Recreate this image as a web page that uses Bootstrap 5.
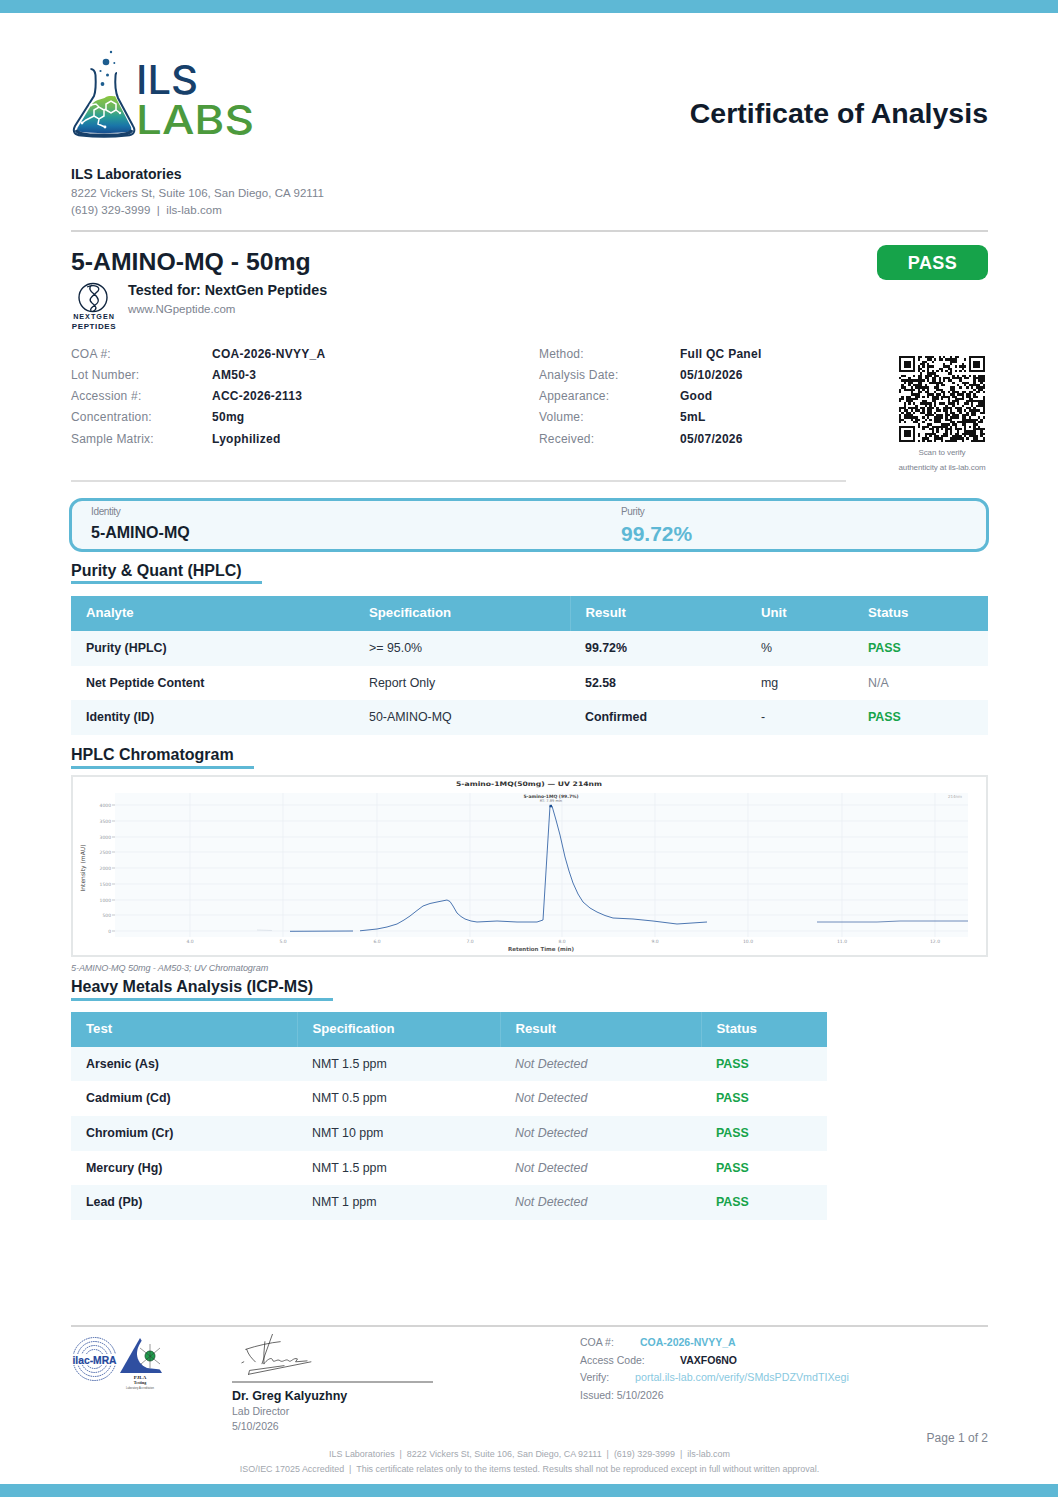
<!DOCTYPE html>
<html lang="en">
<head>
<meta charset="utf-8">
<title>Certificate of Analysis</title>
<link href="https://cdn.jsdelivr.net/npm/bootstrap@5.3.0/dist/css/bootstrap.min.css" rel="stylesheet">
<style>
:root{--cy:#5eb8d5;--ink:#151f2e;--grey:#7d8490;--pale:#f2f9fc;--ok:#16a34a}
html,body{margin:0;background:#fff}
body{font-family:"Liberation Sans",Arial,sans-serif;color:var(--ink);width:1058px;height:1497px;overflow:hidden;position:relative}
.bar{height:13px;background:var(--cy)}
.page{padding:0 70px 7px 71px;height:1471px;display:flex;flex-direction:column}
.hdr{height:87px;margin-top:37px}
.hdr svg{overflow:visible}
.doc-title{font-size:28.5px;font-weight:700;line-height:1;margin:0 0 10px;color:#101b2b}
.lab{margin-top:28px;height:65px}
.lab b{font-size:14px;display:block;line-height:19.5px}
.lab span{font-size:11.5px;color:var(--grey);display:block;letter-spacing:.05px;line-height:17.25px}
.rule{height:2px;background:#d4d4d4;margin:0}
.prod{height:44px;margin-top:13px}
.prod h1{font-size:24.8px;font-weight:700;line-height:34px;margin:0}
.pass-badge{width:111px;height:35px;border-radius:9px;background:var(--ok);color:#fff;font-size:18px;font-weight:700;letter-spacing:.4px;padding-top:2px}
.tested{height:49px;margin-top:-8px}
.tested svg{width:46px;height:49px;flex:none}
.tested .t{margin-left:11px}
.tested b{display:block;font-size:14.3px;line-height:18px}
.tested span{display:block;font-size:11.5px;color:var(--grey);line-height:20px}
.meta{margin-top:13px;height:139px}
.meta-left{width:775px;border-bottom:2px solid #dedede;height:139px}
.meta-grid{display:grid;grid-template-columns:141px 327px 141px 1fr;grid-auto-rows:21.25px;align-items:center;font-size:12px}
.meta-grid .k{color:var(--grey);letter-spacing:.2px}
.meta-grid .v{font-weight:700;color:#1a2433;letter-spacing:.27px}
.qr-col{width:92px;margin-left:auto;text-align:center;font-size:8px;color:var(--grey);letter-spacing:-.1px}
.qr-col svg{display:block;width:86px;height:86px;margin:13px auto 2.500px}
.qr-col div{line-height:15px;white-space:nowrap}
.summary{margin:16px -1px 0 -2px;height:54px;border:3px solid var(--cy);border-radius:13px;background:var(--pale);padding:5px 0 0 19px;display:flex}
.summary .a{width:530px}
.summary small{display:block;font-size:10px;line-height:12px;color:var(--grey);letter-spacing:-.35px}
.summary b{display:block;font-size:16px;line-height:26px;margin-top:2px}
.summary .pur{color:var(--cy);font-size:21px;margin-top:3px}
.sec{display:inline-block;align-self:flex-start;font-size:16px;font-weight:700;line-height:19px;margin:0;padding:0 20px 2px 0;border-bottom:3px solid var(--cy)}
.s1{margin-top:9px;padding-bottom:1px}.s2{margin-top:10px}.s3{margin-top:3px}
.coa{table-layout:fixed;margin:0;--bs-table-bg:transparent;--bs-table-striped-bg:transparent;border-collapse:collapse;font-size:12.4px}
.coa th{background:var(--cy);color:#fff;font-size:13.2px;font-weight:700;height:35px;border:0;padding:0 15px 1px;vertical-align:middle}
.t1 th:nth-child(2),.t2 th:not(:last-child){border-right:1px solid #72c1da}
.coa td{height:34.6px;padding:0 15px;border:0;vertical-align:middle;color:#2a3442}
.coa tbody tr:nth-child(odd) td{background:var(--pale)}
.coa td.n{font-weight:700;color:#1a2433}
.coa td.g{font-weight:700;color:var(--ok)}
.coa td.na{color:var(--grey)}
.coa td.nd{font-style:italic;color:var(--grey)}
.t1{width:917px;margin-top:12px}
.t2{width:756px;margin-top:11px}
.c283{width:283px}.c216{width:216px}.c176{width:176px}.c107{width:107px}.c135{width:135px}
.c226{width:226px}.c203{width:203px}.c201{width:201px}.c126{width:126px}
.chart{margin-top:6px;height:182px;border:2px solid #e4e7e8}
.chart svg{display:block;width:913px;height:178px}
.cap{font-size:9.1px;font-style:italic;color:var(--grey);line-height:11px;margin-top:6px;letter-spacing:-.1px}
.foot{margin-top:auto}
.foot-top{height:113px;padding-top:7px;display:flex}
.acc{width:161px}
.acc svg{display:block;width:100px;height:62px}
.sig{width:201px}
.sig svg{display:block;width:201px;height:49px;border-bottom:2px solid #aaa}
.sig b{display:block;font-size:12.5px;line-height:16px;margin-top:5px}
.sig span{display:block;font-size:10.5px;line-height:15px;color:var(--grey)}
.ver{margin-left:147px;font-size:10.5px;color:var(--grey);line-height:17.6px}
.ver .x{display:flex}
.ver .l1{width:60px}.ver .l2{width:100px}.ver .l3{width:55px}
.ver b.c{color:var(--cy)}.ver b.d{color:#1a2433}.ver .u{color:#89c9df;font-size:10.7px}
.pg{font-size:12px;color:var(--grey);text-align:right;line-height:14px;margin-top:-9px}
.fine{font-size:8.95px;line-height:15px;color:#a3a8af;text-align:center;margin-top:2px;height:30px}
.bar-b{position:absolute;left:0;right:0;bottom:0}
</style>
</head>
<body>
<div class="bar"></div>
<div class="page">
  <div class="hdr d-flex justify-content-between align-items-end">
    <svg width="183" height="87" viewBox="71 50 183 87" role="img" aria-label="ILS Labs">
      <defs>
        <linearGradient id="liq" x1="0" y1="0" x2="0" y2="1"><stop offset="0" stop-color="#8cc63f"/><stop offset=".3" stop-color="#68b560"/><stop offset=".55" stop-color="#2a9d96"/><stop offset=".8" stop-color="#1a75a8"/><stop offset="1" stop-color="#174f8f"/></linearGradient>
      </defs>
      <path d="M92 104C98 98 102 100 106 97C110 95 113 97 115 96L131 127C132 130 130 131.500 127 132C113 133.500 95 133.500 82 132C78 131.500 76 130 78 127Z" fill="url(#liq)"/>
      <path d="M90.500 69C94 69 95 71 95.500 75C96 84 95.500 92 94 96L75 126C72 132 75 135 81 135.500C95 137 113 137 127 135.500C134 135 136 131 133 126L118 98C115.500 92 115 82 115.500 76C115.500 73.500 116 73 117 73" fill="none" stroke="#17406a" stroke-width="2"/>
      <path d="M76 130C78 134 84 134.500 90 135H118C124 134.500 130 134 132 130" fill="none" stroke="#17406a" stroke-width="3"/>
      <g fill="#1d5d8f">
        <circle cx="106" cy="62" r="3.300"/><circle cx="111" cy="52" r="1.200"/><circle cx="114.300" cy="63" r="1"/><circle cx="100.500" cy="71" r="1.100"/><circle cx="107.500" cy="75" r="1.500"/><circle cx="102.500" cy="84" r="1.900"/>
      </g>
      <g fill="none" stroke="#fff" stroke-width="1.500">
        <path d="M106 104l5 -3l5 3v6l-5 3l-5 -3zM94 110l5 -3l5 3v6l-5 3l-5 -3zM104 110l2 -1M99 119l-1 5l7 3M94 116l-8 4l-4 3M116 110l4 3M99 107l-3 -3l-5 1"/>
      </g>
      <g fill="#fff"><circle cx="105" cy="127" r="1.400"/><circle cx="82" cy="123" r="1.400"/><circle cx="91" cy="105" r="1.400"/><circle cx="120" cy="113" r="1.200"/></g>
      <text x="136" y="94" font-family="Inter,'Open Sans',sans-serif" font-weight="500" font-size="39" fill="#17406a" textLength="62" lengthAdjust="spacingAndGlyphs">ILS</text>
      <text x="136" y="134" font-family="Inter,'Open Sans',sans-serif" font-weight="500" font-size="40" fill="#4c9a3d" textLength="118" lengthAdjust="spacingAndGlyphs">LABS</text>
    </svg>
    <h2 class="doc-title">Certificate of Analysis</h2>
  </div>

  <div class="lab">
    <b>ILS Laboratories</b>
    <span>8222 Vickers St, Suite 106, San Diego, CA 92111</span>
    <span>(619) 329-3999 &nbsp;|&nbsp; ils-lab.com</span>
  </div>
  <div class="rule"></div>

  <div class="prod d-flex justify-content-between align-items-start">
    <h1>5-AMINO-MQ - 50mg</h1>
    <div class="pass-badge d-flex align-items-center justify-content-center">PASS</div>
  </div>

  <div class="tested d-flex">
    <svg viewBox="71 281 46 49" role="img" aria-label="NextGen Peptides">
      <circle cx="93" cy="297.500" r="14" fill="none" stroke="#10253f" stroke-width="1.400"/>
      <path d="M87 287C95 284 101 287 98 291C93 296 87 299 92 303C96 306 98 309 93 311.500M92 285C88 288 90 291 94 294C99 298 100 302 95 305C91 308 90 309 91 311" fill="none" stroke="#10253f" stroke-width="1.300"/>
      <text x="94" y="319" text-anchor="middle" font-size="7.200" font-weight="700" letter-spacing="1" fill="#10253f" font-family="'Liberation Sans',sans-serif">NEXTGEN</text>
      <text x="94" y="329" text-anchor="middle" font-size="8" font-weight="700" letter-spacing=".6" fill="#10253f" font-family="'Liberation Sans',sans-serif">PEPTIDES</text>
    </svg>
    <div class="t"><b>Tested for: NextGen Peptides</b><span>www.NGpeptide.com</span></div>
  </div>

  <div class="meta d-flex">
    <div class="meta-left">
      <div class="meta-grid">
        <div class="k">COA #:</div><div class="v">COA-2026-NVYY_A</div><div class="k">Method:</div><div class="v">Full QC Panel</div>
        <div class="k">Lot Number:</div><div class="v">AM50-3</div><div class="k">Analysis Date:</div><div class="v">05/10/2026</div>
        <div class="k">Accession #:</div><div class="v">ACC-2026-2113</div><div class="k">Appearance:</div><div class="v">Good</div>
        <div class="k">Concentration:</div><div class="v">50mg</div><div class="k">Volume:</div><div class="v">5mL</div>
        <div class="k">Sample Matrix:</div><div class="v">Lyophilized</div><div class="k">Received:</div><div class="v">05/07/2026</div>
      </div>
    </div>
    <div class="qr-col">
      <svg id="qr" viewBox="0 0 37 37" shape-rendering="crispEdges" role="img" aria-label="QR code"></svg>
      <div>Scan to verify</div>
      <div>authenticity at ils-lab.com</div>
    </div>
  </div>

  <div class="summary">
    <div class="a"><small>Identity</small><b>5-AMINO-MQ</b></div>
    <div><small>Purity</small><b class="pur">99.72%</b></div>
  </div>

  <h3 class="sec s1">Purity &amp; Quant (HPLC)</h3>
  <table class="table coa t1">
    <colgroup><col class="c283"><col class="c216"><col class="c176"><col class="c107"><col class="c135"></colgroup>
    <thead><tr><th>Analyte</th><th>Specification</th><th>Result</th><th>Unit</th><th>Status</th></tr></thead>
    <tbody>
      <tr><td class="n">Purity (HPLC)</td><td>&gt;= 95.0%</td><td class="n">99.72%</td><td>%</td><td class="g">PASS</td></tr>
      <tr><td class="n">Net Peptide Content</td><td>Report Only</td><td class="n">52.58</td><td>mg</td><td class="na">N/A</td></tr>
      <tr><td class="n">Identity (ID)</td><td>50-AMINO-MQ</td><td class="n">Confirmed</td><td>-</td><td class="g">PASS</td></tr>
    </tbody>
  </table>

  <h3 class="sec s2">HPLC Chromatogram</h3>
  <div class="chart">
    <svg viewBox="73 777 913 178" role="img" aria-label="HPLC chromatogram" font-family="'DejaVu Sans',sans-serif">
      <rect x="115" y="793" width="853" height="144" fill="#f8fbfd"/>
      <g stroke="#e9eef2" stroke-width=".7">
        <path d="M190 793V937M283 793V937M377 793V937M470 793V937M562 793V937M655 793V937M748 793V937M842 793V937M935 793V937"/>
        <path d="M115 805H968M115 821H968M115 837H968M115 852H968M115 868H968M115 884H968M115 900H968M115 915H968M115 931H968"/>
      </g>
      <g stroke="#9aa3ab" stroke-width=".6"><path d="M112 805h3M112 821h3M112 837h3M112 852h3M112 868h3M112 884h3M112 900h3M112 915h3M112 931h3"/></g>
      <g font-size="4.500" fill="#9097a0" text-anchor="end">
        <text x="111" y="807">4000</text><text x="111" y="823">3500</text><text x="111" y="839">3000</text><text x="111" y="854">2500</text><text x="111" y="870">2000</text><text x="111" y="886">1500</text><text x="111" y="902">1000</text><text x="111" y="917">500</text><text x="111" y="933">0</text>
      </g>
      <g font-size="4.500" fill="#9097a0" text-anchor="middle">
        <text x="190" y="943">4.0</text><text x="283" y="943">5.0</text><text x="377" y="943">6.0</text><text x="470" y="943">7.0</text><text x="562" y="943">8.0</text><text x="655" y="943">9.0</text><text x="748" y="943">10.0</text><text x="842" y="943">11.0</text><text x="935" y="943">12.0</text>
      </g>
      <text x="529" y="786" text-anchor="middle" font-size="6.200" font-weight="700" fill="#333" textLength="146" lengthAdjust="spacingAndGlyphs">5-amino-1MQ(50mg) — UV 214nm</text>
      <text x="551" y="798" text-anchor="middle" font-size="4.500" font-weight="700" fill="#444">5-amino-1MQ (99.7%)</text>
      <text x="551" y="802" text-anchor="middle" font-size="3.600" fill="#777">RT: 7.89 min</text>
      <text x="955" y="798" text-anchor="middle" font-size="4" fill="#aaa">214nm</text>
      <text x="541" y="951" text-anchor="middle" font-size="5.500" font-weight="700" fill="#555">Retention Time (min)</text>
      <text transform="translate(85 868) rotate(-90)" text-anchor="middle" font-size="6" fill="#444">Intensity (mAU)</text>
      <path d="M257 930L272 930.500" stroke="#d5dde5" stroke-width=".7" fill="none"/>
      <path d="M290 931.300L353 931M360 930.800L377 929L387 927L397 924L404 920L410 916L417 910.500L423 906L430 903.500L437 902L447 900L450 901.500L453 906L457 913L461 916.500L465 919L471 921L477 922L497 921L517 922L537 922L543 920L550 806L552 806L556 820L560 835L565 857L569 871L573 883L578 894L583 902L590 908L597 912L605 915.500L613 918L633 919L653 921L677 924L707 922" fill="none" stroke="#3867a8" stroke-width=".9"/>
      <path d="M817 922L850 922L877 922L900 921L930 921L968 921" fill="none" stroke="#4a6ea8" stroke-width=".8"/>
      <rect x="549.500" y="804.800" width="2.500" height="2.500" fill="#1d4f91"/>
    </svg>
  </div>
  <div class="cap">5-AMINO-MQ 50mg - AM50-3; UV Chromatogram</div>

  <h3 class="sec s3">Heavy Metals Analysis (ICP-MS)</h3>
  <table class="table coa t2">
    <colgroup><col class="c226"><col class="c203"><col class="c201"><col class="c126"></colgroup>
    <thead><tr><th>Test</th><th>Specification</th><th>Result</th><th>Status</th></tr></thead>
    <tbody>
      <tr><td class="n">Arsenic (As)</td><td>NMT 1.5 ppm</td><td class="nd">Not Detected</td><td class="g">PASS</td></tr>
      <tr><td class="n">Cadmium (Cd)</td><td>NMT 0.5 ppm</td><td class="nd">Not Detected</td><td class="g">PASS</td></tr>
      <tr><td class="n">Chromium (Cr)</td><td>NMT 10 ppm</td><td class="nd">Not Detected</td><td class="g">PASS</td></tr>
      <tr><td class="n">Mercury (Hg)</td><td>NMT 1.5 ppm</td><td class="nd">Not Detected</td><td class="g">PASS</td></tr>
      <tr><td class="n">Lead (Pb)</td><td>NMT 1 ppm</td><td class="nd">Not Detected</td><td class="g">PASS</td></tr>
    </tbody>
  </table>

  <div class="foot">
    <div class="rule"></div>
    <div class="foot-top">
      <div class="acc">
        <svg viewBox="71 1334 100 62" role="img" aria-label="Accreditation marks">
          <g fill="none" stroke="#2a4d9b" stroke-width=".9" stroke-dasharray="1.500 .8">
            <circle cx="94.500" cy="1359" r="21.500"/><circle cx="94.500" cy="1359" r="17.500"/><circle cx="94.500" cy="1359" r="13.500"/><circle cx="94.500" cy="1359" r="9.500"/>
          </g>
          <rect x="72" y="1354" width="45" height="11" fill="#fff"/>
          <text x="94.500" y="1363.500" text-anchor="middle" font-size="11" font-weight="700" fill="#24479c" stroke="#24479c" stroke-width=".2" textLength="44" lengthAdjust="spacingAndGlyphs" font-family="'Liberation Sans',sans-serif">ilac-MRA</text>
          <path d="M140 1338L162 1373H120Z" fill="#2f4fa0"/>
          <path d="M145 1337C134 1348 134 1362 147 1368L165 1370V1337Z" fill="#fff"/>
          <circle cx="150" cy="1356" r="5" fill="#1f9d4c" stroke="#14532d" stroke-width=".8"/>
          <path d="M140 1348L160 1364M160 1348L141 1364M150 1344V1368" stroke="#333" stroke-width=".5" fill="none"/>
          <text x="140" y="1378.500" text-anchor="middle" font-size="5" font-weight="700" fill="#222" font-family="'Liberation Serif',serif">PJLA</text>
          <text x="140" y="1383.500" text-anchor="middle" font-size="4" font-weight="700" fill="#222" font-family="'Liberation Serif',serif">Testing</text>
          <text x="140" y="1389" text-anchor="middle" font-size="2.600" fill="#555" font-family="'Liberation Sans',sans-serif">Laboratory Accreditation</text>
        </svg>
      </div>
      <div class="sig">
        <svg viewBox="0 0 201 49" role="img" aria-label="Signature">
          <g fill="none" stroke="#2c2c2c" stroke-width=".75" stroke-linecap="round" stroke-linejoin="round">
            <path d="M10 16C22 12 36 9 46 8M11 16C13 22 16 25 20 29M38 0L30 22L27 31M30 8L29 20L29 31M29 31C33 26 37 24 38 27C39 31 43 25 46 28C49 30 52 25 55 28C57 30 60 24 64 26L62 29L74 28"/>
            <path d="M13 42L78 29M13 42L14 38L50 33M6 30L8 29"/>
          </g>
        </svg>
        <b>Dr. Greg Kalyuzhny</b>
        <span>Lab Director</span>
        <span>5/10/2026</span>
      </div>
      <div class="ver">
        <div class="x"><span class="l1">COA #:</span><b class="c">COA-2026-NVYY_A</b></div>
        <div class="x"><span class="l2">Access Code:</span><b class="d">VAXFO6NO</b></div>
        <div class="x"><span class="l3">Verify:</span><span class="u">portal.ils-lab.com/verify/SMdsPDZVmdTIXegi</span></div>
        <div>Issued: 5/10/2026</div>
      </div>
    </div>
    <div class="pg">Page 1 of 2</div>
    <div class="fine">
      <div>ILS Laboratories &nbsp;|&nbsp; 8222 Vickers St, Suite 106, San Diego, CA 92111 &nbsp;|&nbsp; (619) 329-3999 &nbsp;|&nbsp; ils-lab.com</div>
      <div>ISO/IEC 17025 Accredited &nbsp;|&nbsp; This certificate relates only to the items tested. Results shall not be reproduced except in full without written approval.</div>
    </div>
  </div>
</div>
<div class="bar bar-b"></div>
<script>
(function(){
  var n=37,s=73291,d='';
  function r(){s=(s*1103515245+12345)&2147483647;return (s>>>12)%100;}
  function f(x,y){d+='M'+x+' '+y+'h7v7h-7zM'+(x+1)+' '+(y+1)+'v5h5v-5zM'+(x+2)+' '+(y+2)+'h3v3h-3z';}
  for(var y=0;y<n;y++){for(var x=0;x<n;x++){
    var tl=x<8&&y<8,tr=x>n-9&&y<8,bl=x<8&&y>n-9,al=x>=28&&x<=32&&y>=28&&y<=32;
    if(tl||tr||bl||al)continue;
    var on=(y==6||x==6)?((x+y)%2==0):r()<52;
    if(on)d+='M'+x+' '+y+'h1v1h-1z';
  }}
  f(0,0);f(n-7,0);f(0,n-7);
  d+='M28 28h5v5h-5zM29 29v3h3v-3zM30 30h1v1h-1z';
  document.getElementById('qr').innerHTML='<path fill-rule="evenodd" fill="#111" d="'+d+'"/>';
})();
</script>
</body>
</html>
